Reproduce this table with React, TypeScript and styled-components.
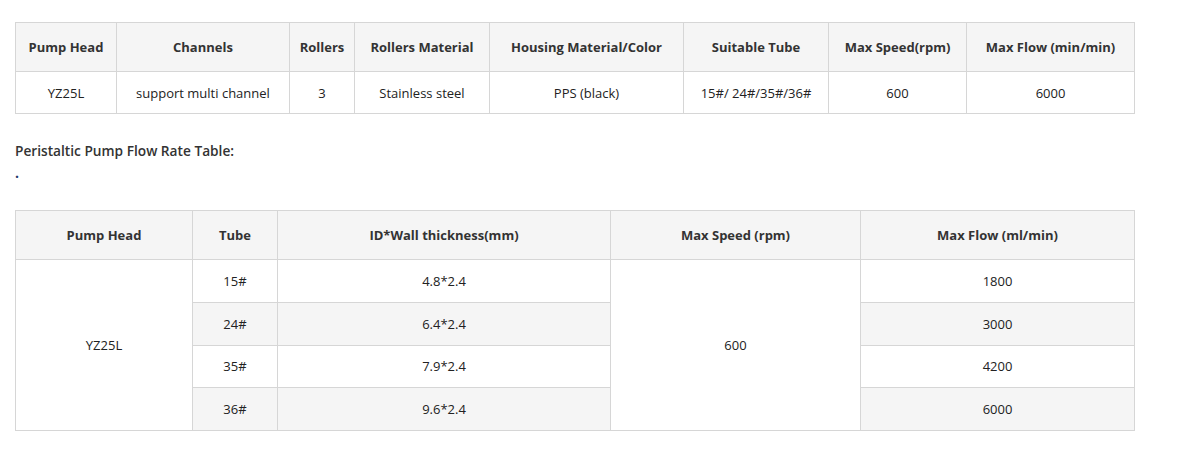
import styled, { createGlobalStyle } from "styled-components";
////////////////////////////////////////////////////////////////////////////////

const GlobalStyle = createGlobalStyle`
  body {
    margin: 0;
    background: #fff;
    font-family: "Open Sans", "Liberation Sans", sans-serif;
    color: #222;
  }
`;

const specHead = [
  "Pump Head",
  "Channels",
  "Rollers",
  "Rollers Material",
  "Housing Material/Color",
  "Suitable Tube",
  "Max Speed(rpm)",
  "Max Flow (min/min)",
];
const specRow = [
  "YZ25L",
  "support multi channel",
  "3",
  "Stainless steel",
  "PPS (black)",
  "15#/ 24#/35#/36#",
  "600",
  "6000",
];
const specCols = [101, 173, 65, 135, 194, 145, 138, 168];

const flowCols = [177, 85, 333, 250, 274];
const flowRows = [
  { tube: "15#", size: "4.8*2.4", flow: "1800" },
  { tube: "24#", size: "6.4*2.4", flow: "3000" },
  { tube: "35#", size: "7.9*2.4", flow: "4200" },
  { tube: "36#", size: "9.6*2.4", flow: "6000" },
];

export default function App() {
  return (
    <Page>
      <GlobalStyle />
      <Table>
        <colgroup>
          {specCols.map((w, i) => (
            <col key={i} style={{ width: w }} />
          ))}
        </colgroup>
        <thead>
          <tr>
            {specHead.map((h) => (
              <Th key={h}>{h}</Th>
            ))}
          </tr>
        </thead>
        <tbody>
          <tr>
            {specRow.map((c, i) => (
              <Td key={i}>{c}</Td>
            ))}
          </tr>
        </tbody>
      </Table>

      <Heading>Peristaltic Pump Flow Rate Table:</Heading>
      <Dot>.</Dot>

      <Table $second>
        <colgroup>
          {flowCols.map((w, i) => (
            <col key={i} style={{ width: w }} />
          ))}
        </colgroup>
        <thead>
          <tr>
            <Th>Pump Head</Th>
            <Th>Tube</Th>
            <Th>ID*Wall thickness(mm)</Th>
            <Th>Max Speed (rpm)</Th>
            <Th>Max Flow (ml/min)</Th>
          </tr>
        </thead>
        <tbody>
          {flowRows.map((r, i) => (
            <tr key={r.tube}>
              {i === 0 && <Td rowSpan={4}>YZ25L</Td>}
              <Td $small $shade={i % 2 === 1}>{r.tube}</Td>
              <Td $small $shade={i % 2 === 1}>{r.size}</Td>
              {i === 0 && <Td rowSpan={4}>600</Td>}
              <Td $small $shade={i % 2 === 1}>{r.flow}</Td>
            </tr>
          ))}
        </tbody>
      </Table>
    </Page>
  );
}

const Page = styled.div`
  padding: 22px 0 0 15px;
  width: 1120px;
`;

const Table = styled.table<{ $second?: boolean }>`
  width: 1120px;
  border-collapse: collapse;
  table-layout: fixed;
  font-size: 13px;
  margin-top: ${(p) => (p.$second ? "27px" : "0")};
`;

const Th = styled.th`
  height: 48px;
  padding: 0 6px;
  background: #f5f5f5;
  border: 1px solid #d6d6d6;
  color: #333;
  font-weight: 700;
  text-align: center;
  vertical-align: middle;
`;

const Td = styled.td<{ $shade?: boolean; $small?: boolean }>`
  height: ${(p) => (p.$small ? "41.75px" : "41px")};
  padding: 0 6px;
  background: ${(p) => (p.$shade ? "#f5f5f5" : "#fff")};
  border: 1px solid #d6d6d6;
  color: #222;
  text-align: center;
  vertical-align: middle;
`;

const Heading = styled.div`
  margin-top: 27px;
  font-size: 13.7px;
  line-height: 20px;
  font-weight: 600;
  color: #333;
`;

const Dot = styled.div`
  margin-top: 2px;
  font-size: 14px;
  line-height: 20px;
  font-weight: 700;
  color: #1f3a6b;
`;
